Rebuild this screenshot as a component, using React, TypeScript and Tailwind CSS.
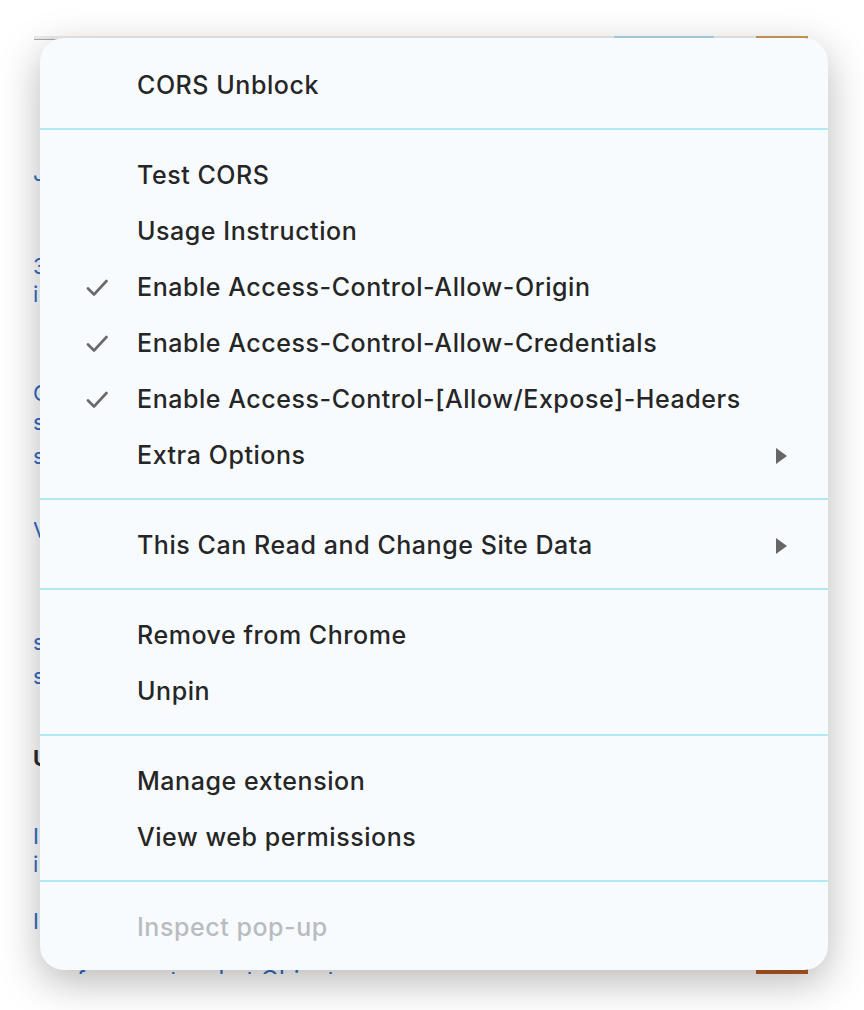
import React from 'react';

type Item = { label: string; checked?: boolean; submenu?: boolean; disabled?: boolean };

const sections: Item[][] = [
  [{ label: 'CORS Unblock' }],
  [
    { label: 'Test CORS' },
    { label: 'Usage Instruction' },
    { label: 'Enable Access-Control-Allow-Origin', checked: true },
    { label: 'Enable Access-Control-Allow-Credentials', checked: true },
    { label: 'Enable Access-Control-[Allow/Expose]-Headers', checked: true },
    { label: 'Extra Options', submenu: true },
  ],
  [{ label: 'This Can Read and Change Site Data', submenu: true }],
  [{ label: 'Remove from Chrome' }, { label: 'Unpin' }],
  [{ label: 'Manage extension' }, { label: 'View web permissions' }],
  [{ label: 'Inspect pop-up', disabled: true }],
];

// first letters of the page lines that peek out on the left of the menu
const pageLetters = [
  { ch: 'J', top: 123 },
  { ch: '3', top: 216 },
  { ch: 'i', top: 244 },
  { ch: 'C', top: 343 },
  { ch: 's', top: 372 },
  { ch: 's', top: 406 },
  { ch: 'V', top: 480 },
  { ch: 's', top: 592 },
  { ch: 's', top: 626 },
  { ch: 'U', top: 708, dark: true },
  { ch: 'I', top: 786 },
  { ch: 'i', top: 814 },
  { ch: 'I', top: 871 },
];

function Check() {
  return (
    <svg width="22" height="18" viewBox="0 0 22 18" fill="none">
      <path d="M2 9.5l6 6L20.5 2" stroke="#6a6a6a" strokeWidth="2.6" strokeLinecap="round" strokeLinejoin="round" />
    </svg>
  );
}

function Arrow() {
  return (
    <svg width="12" height="16" viewBox="0 0 12 16">
      <path d="M0 0L11 8L0 16Z" fill="#666666" />
    </svg>
  );
}

function MenuRow({ item }: { item: Item }) {
  return (
    <div className="flex h-[56px] items-center">
      <div className="flex w-[97px] shrink-0 pl-[46px]">{item.checked && <Check />}</div>
      <span
        className={`whitespace-nowrap text-[25px] font-medium tracking-[0.55px] ${item.disabled ? 'text-[#b9bcbf]' : 'text-[#262626]'}`}
      >
        {item.label}
      </span>
      {item.submenu && (
        <div className="ml-auto pr-[40px]">
          <Arrow />
        </div>
      )}
    </div>
  );
}

function BehindWindow() {
  // the browser page behind the menu, only its edges show
  return (
    <div className="absolute left-[34px] top-[36px] h-[938px] w-[774px] overflow-hidden bg-white">
      <div className="h-[4px] border-b border-[#a9a9a9] bg-[#ececec]" />
      <div className="absolute left-[580px] top-0 h-[4px] w-[100px] rounded-b-full bg-[#aad7e6]" />
      <div className="absolute right-0 top-0 h-[5px] w-[52px] bg-[#c99a55]" />
      <div className="absolute bottom-0 right-0 h-[5px] w-[52px] bg-[#b95a26]" />
      {pageLetters.map((l, i) => (
        <span
          key={i}
          className={`absolute left-[-1px] text-[22px] leading-[28px] ${l.dark ? 'font-bold text-[#2a2a2a]' : 'text-[#2f6bc0]'}`}
          style={{ top: l.top }}
        >
          {l.ch}
        </span>
      ))}
      <span className="absolute left-[20px] top-[926px] whitespace-nowrap text-[24px] text-[#2f6bc0]">
        reference to what Object
      </span>
    </div>
  );
}

export default function App() {
  return (
    <div className="relative h-[1010px] w-[864px] overflow-hidden bg-white" style={{ fontFamily: 'Inter, "Noto Sans", sans-serif' }}>
      <BehindWindow />
      <div className="relative pl-[40px] pt-[38px]">
        <div className="flex h-[932px] w-[788px] flex-col rounded-[24px] bg-[#f7fbfd] pb-[14px] pt-[20px] shadow-[0_12px_40px_rgba(0,0,0,0.28)]">
          {sections.map((section, i) => (
            <React.Fragment key={i}>
              {i > 0 && <div className="mb-[18px] mt-[14px] h-[2px] bg-[#aee9f5]" />}
              {section.map((item) => (
                <MenuRow key={item.label} item={item} />
              ))}
            </React.Fragment>
          ))}
        </div>
      </div>
    </div>
  );
}
